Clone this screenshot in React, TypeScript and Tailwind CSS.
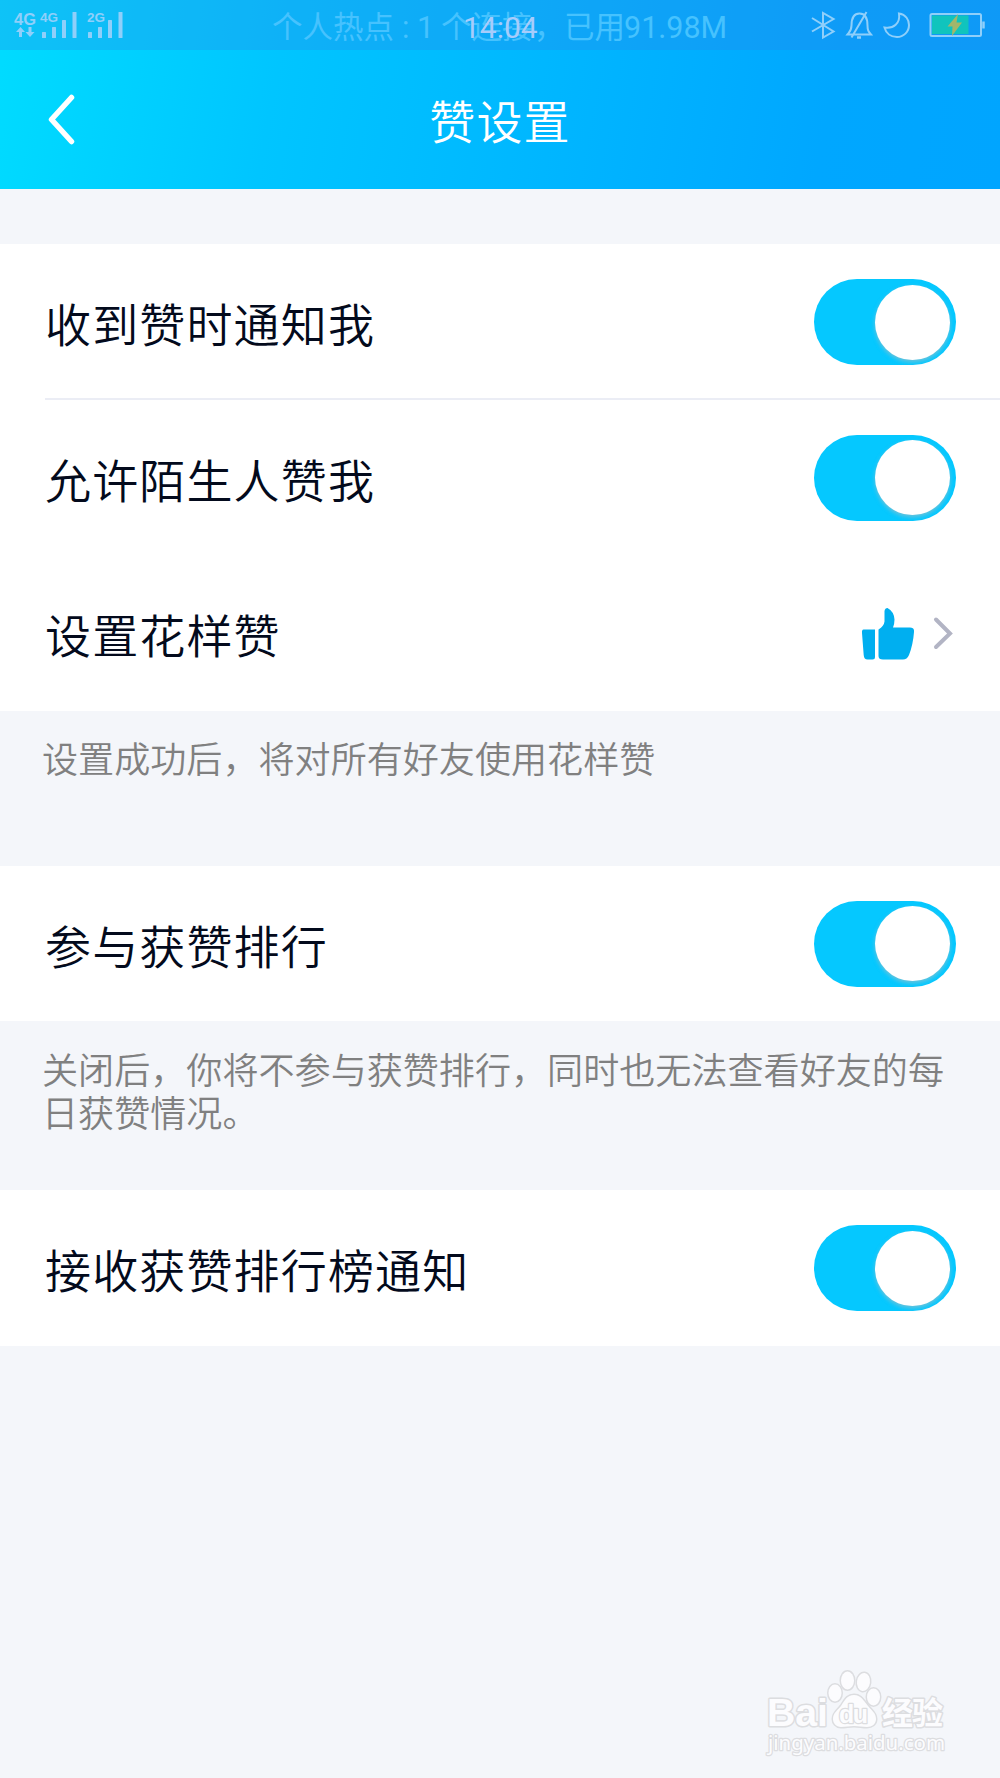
import React, { useState } from "react";
import clsx from "clsx";

type ToggleProps = {
	checked: boolean;
	onChange: () => void;
	label: string;
};

const Toggle: React.FC<ToggleProps> = ({ checked, onChange, label }) => (
	<button
		type="button"
		role="switch"
		aria-checked={checked}
		aria-label={label}
		onClick={onChange}
		className={clsx(
			"flex h-[86px] w-[142px] shrink-0 items-center rounded-full px-[6px]",
			checked ? "justify-end bg-[#05c8ff]" : "justify-start bg-gray-200"
		)}
	>
		<span className="h-[75px] w-[75px] rounded-full bg-white shadow-[0_2px_4px_rgba(190,190,190,0.6)]" />
	</button>
);

type RowProps = {
	label: string;
	children: React.ReactNode;
	className?: string;
};

const Row: React.FC<RowProps> = ({ label, children, className }) => (
	<div
		className={clsx(
			"ml-[45px] flex items-center justify-between pr-[44px]",
			className ?? "h-[155px]"
		)}
	>
		<span className="text-[46px] font-[350] leading-[56px] tracking-[1.15px] text-[#030a1c]">
			{label}
		</span>
		{children}
	</div>
);

const SignalBars = () => (
	<svg width="35" height="26" viewBox="0 0 35 26" fill="currentColor">
		<rect x="0" y="20" width="4" height="6" rx="0.5" />
		<rect x="10" y="15" width="4" height="11" rx="0.5" />
		<rect x="20" y="8" width="4" height="18" rx="0.5" />
		<rect x="30.5" y="0" width="4" height="26" rx="0.5" />
	</svg>
);

const StatusBar = () => (
	<div className="relative h-[50px] bg-[#3878e0]/25 font-['Roboto','Noto_Sans_CJK_SC',sans-serif] text-[#8fcffa]">
		{/* Network indicators */}
		<div className="absolute left-[14px] top-[12px] font-['Liberation_Sans',sans-serif] font-bold">
			<span className="absolute left-0 top-0 text-[16.5px] leading-[14px]">4G</span>
			<svg
				className="absolute left-[2px] top-[15px]"
				width="19"
				height="11"
				viewBox="0 0 19 11"
				fill="currentColor"
			>
				<path d="M4.5 0 9 5H6v5H3V5H0zM14 10l-4.5-5h3V0h3v5h3z" />
			</svg>
			<span className="absolute left-[26px] top-0 text-[13.5px] leading-[11px]">4G</span>
			<div className="absolute left-[28px] top-0">
				<SignalBars />
			</div>
			<span className="absolute left-[73px] top-0 text-[13.5px] leading-[11px]">2G</span>
			<div className="absolute left-[74px] top-0">
				<SignalBars />
			</div>
		</div>

		<div className="absolute left-[272px] top-[6px] flex whitespace-pre text-[30.5px] leading-[44px] text-[#46c2fe]">
			<span className="w-[130px]">个人热点</span>
			<span className="w-[15px]">:</span>
			<span className="w-[24px]">1</span>
			<span className="w-[93px]">个连接</span>
			<span className="w-[30px]">，</span>
			<span className="w-[60px]">已用</span>
			<span>91.98M</span>
		</div>
		<span className="absolute left-[463px] top-[6px] text-[30px] leading-[44px] text-[#a8ccfb]">
			14:04
		</span>

		{/* Bluetooth, silent, do not disturb, battery */}
		<svg
			className="absolute left-[810px] top-[10px]"
			width="178"
			height="30"
			viewBox="0 0 178 30"
			fill="none"
			stroke="currentColor"
			strokeWidth="2"
		>
			<path d="m2 8 21.5 13.5L13 27.5V3l10.5 6L2 21.5" />
			<path d="M37.5 24.5h23.5c-2.5-3-3.5-4-3.5-9 0-7-2-12-8-12s-8 5-8 12c0 5-1.500 6-4 9zM41.5 27.5 56.5 2" />
			<path d="M47 27.5h4" strokeWidth="2.5" />
			<path d="M89 3.5c7 1 10 6.5 10 11.500 0 7-5.500 12-12 12-6 0-11-3.500-12.500-9.500 9 1.500 16-4 14.500-14z" />
			<rect x="120.5" y="4" width="50.5" height="22" rx="1.5" />
			<rect x="122" y="5.5" width="36.5" height="18.5" fill="#10c4bd" stroke="none" />
			<path d="m148 4-10.5 12.5h5L142 26l10-13.500h-5.500z" fill="#a2b66c" stroke="none" />
			<path d="M173.5 11.5v7" strokeWidth="2.5" />
		</svg>
	</div>
);

const Watermark = () => (
	<svg
		className="absolute bottom-0 right-0"
		width="260"
		height="128"
		viewBox="0 0 260 128"
		fill="#fcfcfe"
		stroke="#dcdde0"
		strokeWidth="3"
		strokeLinejoin="round"
		paintOrder="stroke"
	>
		<text x="27" y="76" fontFamily="Liberation Sans" fontWeight="700" fontSize="39" textLength="61" lengthAdjust="spacingAndGlyphs">
			Bai
		</text>
		<ellipse cx="95" cy="43" rx="6.5" ry="8.5" />
		<ellipse cx="107.5" cy="30.5" rx="6.5" ry="9" />
		<ellipse cx="123.5" cy="32" rx="6.5" ry="9" transform="rotate(8 123.5 32)" />
		<ellipse cx="133.5" cy="47" rx="6.5" ry="8.5" />
		<path d="M114 45c7 0 9 5 14 11 4 5 8 7 8 13 0 5-4 8-9 8-5 0-8-1-13-1s-8 1-13 1c-5 0-8-4-8-8 0-6 4-8 8-13 4-6 6-11 13-11z" />
		<text x="99" y="73" fontFamily="Liberation Sans" fontWeight="700" fontSize="25" strokeWidth="2.5" textLength="29">
			du
		</text>
		<text x="142" y="74" fontFamily="Noto Sans CJK SC" fontWeight="700" fontSize="31" textLength="61">
			经验
		</text>
		<text x="28" y="100" fontFamily="Noto Sans" fontSize="20" strokeWidth="2.5" textLength="177" lengthAdjust="spacingAndGlyphs">
			jingyan.baidu.com
		</text>
	</svg>
);

const App = () => {
	const [settings, setSettings] = useState({
		notifyLike: true,
		allowStranger: true,
		joinRanking: true,
		notifyRanking: true,
	});

	const toggle = (key: keyof typeof settings) =>
		setSettings((prev) => ({ ...prev, [key]: !prev[key] }));

	return (
		<div className="relative h-[1778px] w-[1000px] overflow-hidden bg-[#f4f6fa] font-['Noto_Sans_CJK_SC',sans-serif]">
			<header className="h-[189px] bg-[linear-gradient(100deg,#00dcff_0%,#00c5ff_28%,#00b8ff_52%,#00a7ff_82%,#00a5ff_100%)]">
				<StatusBar />
				<div className="grid h-[139px] grid-cols-[1fr_auto_1fr] items-center text-white">
					<button type="button" aria-label="返回" className="ml-[46px] w-[32px]">
						<svg
							width="32"
							height="52"
							viewBox="0 0 32 52"
							fill="none"
							stroke="currentColor"
							strokeWidth="5.5"
							strokeLinecap="round"
							strokeLinejoin="round"
						>
							<path d="m25.5 3.5-20 22 20 22" />
						</svg>
					</button>
					<h1 className="pb-[2px] text-[46px] font-[350] leading-[56px] tracking-[1.15px]">赞设置</h1>
				</div>
			</header>

			<main className="pt-[55px]">
				<section className="bg-white">
					<Row label="收到赞时通知我" className="h-[156px] border-b-2 border-[#ebedf5] pt-[2px]">
						<Toggle
							label="收到赞时通知我"
							checked={settings.notifyLike}
							onChange={() => toggle("notifyLike")}
						/>
					</Row>
					<Row label="允许陌生人赞我">
						<Toggle
							label="允许陌生人赞我"
							checked={settings.allowStranger}
							onChange={() => toggle("allowStranger")}
						/>
					</Row>
					<Row label="设置花样赞" className="h-[156px]">
						<div className="flex items-center gap-[19px] pr-[1px]">
							<svg className="mt-[3px]" width="54" height="54" viewBox="0 0 54 54" fill="#00aff0">
								<path d="M3.5 21.5H15V49q0 2.5-2.5 2.5H7.5Q4 51.5 3.7 47L2 25q-.3-3.500 1.500-3.500z" />
								<path d="M18.5 21.5Q24 18 24.5 13.500V3q.5-3 3-3 6.500 3.500 7 11.500 0 4-1.500 8h17q4.500 0 4 4.500-1 13-5 23-2 4.500-6 4.500H23q-4.500 0-4.500-3.500z" />
							</svg>
							<svg
								width="22"
								height="34"
								viewBox="0 0 22 34"
								fill="none"
								stroke="#b2b4c4"
								strokeWidth="4"
								strokeLinecap="round"
							>
								<path d="m3 3.5 14 14L3 31" />
							</svg>
						</div>
					</Row>
				</section>
				<p className="h-[155px] px-[42px] pt-[25px] text-[36.1px] font-[350] leading-[43px] text-[#808080]">
					设置成功后，将对所有好友使用花样赞
				</p>

				<section className="bg-white">
					<Row label="参与获赞排行">
						<Toggle
							label="参与获赞排行"
							checked={settings.joinRanking}
							onChange={() => toggle("joinRanking")}
						/>
					</Row>
				</section>
				<p className="h-[169px] px-[42px] pt-[26px] text-[36.1px] font-[350] leading-[43px] text-[#808080]">
					关闭后，你将不参与获赞排行，同时也无法查看好友的每日获赞情况。
				</p>

				<section className="bg-white">
					<Row label="接收获赞排行榜通知" className="h-[156px]">
						<Toggle
							label="接收获赞排行榜通知"
							checked={settings.notifyRanking}
							onChange={() => toggle("notifyRanking")}
						/>
					</Row>
				</section>
			</main>

			<Watermark />
		</div>
	);
};

export default App;
